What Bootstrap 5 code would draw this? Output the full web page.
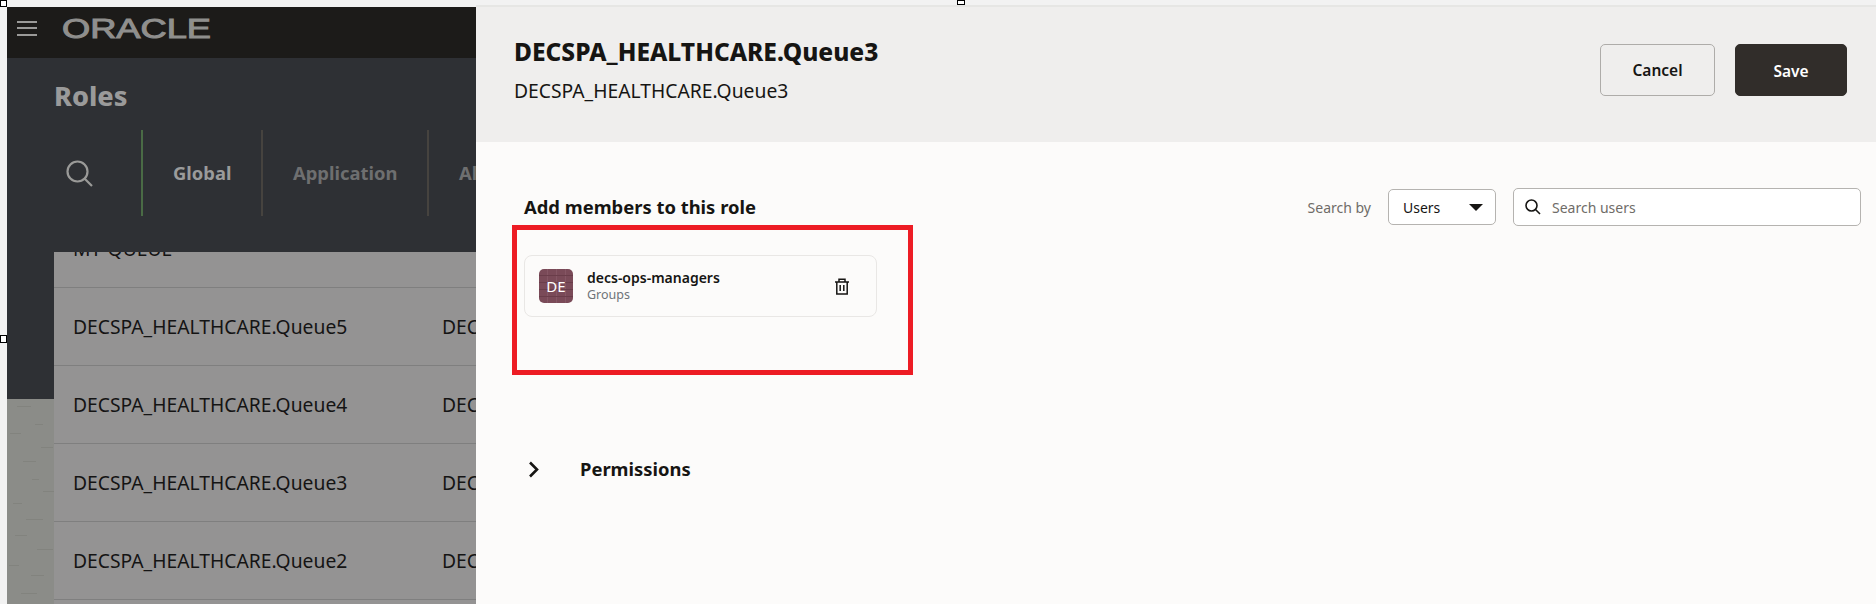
<!DOCTYPE html>
<html lang="en">
<head>
<meta charset="utf-8">
<title>Roles</title>
<link rel="stylesheet" href="https://cdn.jsdelivr.net/npm/bootstrap@5.3.0/dist/css/bootstrap.min.css">
<style>
html,body{height:604px;overflow:hidden}
body{background:#f2f2f2;font-family:"Noto Sans",sans-serif;color:#161513;padding:7px 0 0 7px;position:relative}
.shell{height:597px}
.bgzone{width:469px;flex:none;overflow:hidden}
.topbar{height:51px;background:#1c1b19;padding:0 0 9px 10px;gap:25px}
.burger{width:20px;height:15px;border-top:2px solid #9a9a98;border-bottom:2px solid #9a9a98;flex:none}
.burger::after{content:"";display:block;height:2px;background:#9a9a98;margin-top:4px}
.logo{display:block;flex:none}
.logo text{font-family:"Liberation Sans",sans-serif;font-size:27px;font-weight:400;fill:#8f8f8d;stroke:#8f8f8d;stroke-width:1px}
.darkhead{height:194px;background:#2e3034;padding:18px 0 0 47px}
.pagetitle{font-size:27px;font-weight:800;line-height:40px;color:#9a9a9a;margin:0}
.tabstrip{height:86px;margin-top:14px;width:460px}
.tabsearch{width:89px;flex:none;padding-left:12px;border-right:2px solid #4a6b45;height:100%}
.tabitem{height:100%;flex:none;padding:0 30px;font-size:18.4px;font-weight:700;color:#6e6f70;border-right:2px solid #46433f;white-space:nowrap}
.tabitem.on{color:#9a9b9b;width:120px}
.tabitem.app{width:166px}
.lower{height:352px}
.gutter{width:47px;flex:none}
.gutterdark{height:147px;background:#2e3034}
.gutterpaper{display:block;width:47px;height:205px;background:#8b8c88}
.tablewrap{background:#949393;overflow:hidden;flex:1 1 auto;min-width:0}
.rowlist{margin-top:-42px;width:900px}
.qrow{height:78px;border-bottom:1px solid #7f7f7f;font-size:19.3px;color:#141414;padding:2px 0 0 19px}
.qrow span{width:369px;flex:none;white-space:nowrap}
.drawer{flex:1 1 auto;background:#fcfbfa;min-width:0;box-shadow:0 -2px 0 #e6e6e4}
.drawerhead{height:135px;background:#efeeed;padding:0 29px 9px 38px}
.drawertitle{font-size:24.5px;font-weight:800;line-height:32px;margin:-1px 0 10px;color:#161513}
.drawersub{font-size:19.3px;line-height:26px;margin:0}
.actbtn{height:52px;border-radius:5px;font-size:15.5px;font-weight:600;padding:0;display:flex;align-items:center;justify-content:center}
.actcancel{width:115px;border:1px solid #aeaca9;background:transparent;color:#161513;padding-top:1px}
.actsave{width:112px;background:#312d2a;border:1px solid #312d2a;color:#fff;padding-top:3px}
.actcancel:hover{background:transparent;color:#161513;border-color:#aeaca9}
.actsave:hover{background:#312d2a;color:#fff;border-color:#312d2a}
.actgap{gap:20px}
.drawerbody{padding:46px 15px 0 36px}
.sectiontitle{font-size:18.4px;font-weight:700;margin:0 0 0 12px;line-height:24px}
.searchlabel{font-size:14px;color:#6f6c68;margin-right:17px}
.pickbox{width:108px;height:36px;border:1px solid #b5b3b0;border-radius:5px;background:#fff;font-size:14px;padding:0 12px 0 14px;margin-right:17px}
.caretdown{width:0;height:0;border-left:7px solid transparent;border-right:7px solid transparent;border-top:7px solid #161513}
.findbox{width:348px;height:38px;border:1px solid #b5b3b0;border-radius:5px;background:#fff;font-size:14px;color:#6f6c68;padding-left:11px;gap:11px}
.redframe{width:401px;height:150px;border:5px solid #ed1c24;padding:25px 0 0 7px;margin-top:-1px}
.membercard{width:353px;height:62px;border:1px solid #e9e7e5;border-radius:8px;padding:0 26px 0 14px}
.avatarbox{width:34px;height:34px;border-radius:5px;color:#fff;font-size:15px;background-color:#7a4a58;background-image:repeating-linear-gradient(0deg,transparent 0 6px,#6a3d4a 6px 7px),repeating-linear-gradient(90deg,transparent 0 8px,#855664 8px 9px);margin-right:14px;flex:none}
.membername{font-size:14px;font-weight:600;line-height:18px;color:#161513}
.membertype{font-size:12.5px;line-height:16px;color:#6f7378}
.permline{margin:82px 0 0 16px;font-size:18.4px;font-weight:700;line-height:24px;gap:41px}
.handle{position:absolute;width:7px;background:#fff;border:1px solid #000}
.handle1{left:0;top:0;height:7px}
.handle2{left:0;top:335px;height:8px}
.handle3{left:957px;top:0;height:5px;width:8px}
</style>
</head>
<body>
<div class="d-flex shell">
  <div class="bgzone d-flex flex-column">
    <div class="topbar d-flex align-items-center">
      <div class="burger"></div>
      <svg class="logo" width="150" height="22" viewBox="0 0 150 22"><text x="0" y="20.5" textLength="149" lengthAdjust="spacingAndGlyphs">ORACLE</text></svg>
    </div>
    <div class="darkhead">
      <h1 class="pagetitle">Roles</h1>
      <div class="tabstrip d-flex align-items-center">
        <div class="tabsearch d-flex align-items-center">
          <svg width="27" height="27" viewBox="0 0 27 27" fill="none" stroke="#9a9a98" stroke-width="2.2"><circle cx="11.5" cy="11.5" r="10"/><path d="M18.5 18.5 26 26"/></svg>
        </div>
        <div class="tabitem on d-flex align-items-center">Global</div>
        <div class="tabitem app d-flex align-items-center">Application</div>
        <div class="tabitem border-0 d-flex align-items-center">All</div>
      </div>
    </div>
    <div class="lower d-flex">
      <div class="gutter">
        <div class="gutterdark"></div>
        <svg class="gutterpaper" viewBox="0 0 47 205" fill="#82837e">
          <rect x="10" y="7" width="14" height="1"/><rect x="28" y="25" width="8" height="1"/><rect x="3" y="34" width="11" height="1"/><rect x="34" y="48" width="12" height="1"/>
          <rect x="16" y="62" width="13" height="1"/><rect x="25" y="80" width="7" height="1"/><rect x="36" y="92" width="11" height="1"/><rect x="6" y="104" width="9" height="1"/>
          <rect x="19" y="120" width="17" height="1"/><rect x="8" y="136" width="12" height="1"/><rect x="30" y="150" width="16" height="1"/><rect x="2" y="166" width="10" height="1"/>
          <rect x="24" y="176" width="13" height="1"/><rect x="14" y="194" width="16" height="1"/>
        </svg>
      </div>
      <div class="tablewrap">
        <div class="rowlist">
          <div class="qrow d-flex align-items-center"><span>MY-QUEUE</span></div>
          <div class="qrow d-flex align-items-center"><span>DECSPA_HEALTHCARE.Queue5</span><span>DECSPA_HEALTHCARE.Queue5</span></div>
          <div class="qrow d-flex align-items-center"><span>DECSPA_HEALTHCARE.Queue4</span><span>DECSPA_HEALTHCARE.Queue4</span></div>
          <div class="qrow d-flex align-items-center"><span>DECSPA_HEALTHCARE.Queue3</span><span>DECSPA_HEALTHCARE.Queue3</span></div>
          <div class="qrow d-flex align-items-center"><span>DECSPA_HEALTHCARE.Queue2</span><span>DECSPA_HEALTHCARE.Queue2</span></div>
        </div>
      </div>
    </div>
  </div>
  <div class="drawer d-flex flex-column">
    <div class="drawerhead d-flex justify-content-between align-items-center">
      <div>
        <h2 class="drawertitle">DECSPA_HEALTHCARE.Queue3</h2>
        <p class="drawersub">DECSPA_HEALTHCARE.Queue3</p>
      </div>
      <div class="d-flex actgap">
        <button type="button" class="btn actbtn actcancel">Cancel</button>
        <button type="button" class="btn actbtn actsave">Save</button>
      </div>
    </div>
    <div class="drawerbody">
      <div class="d-flex justify-content-between align-items-center">
        <h3 class="sectiontitle">Add members to this role</h3>
        <div class="d-flex align-items-center">
          <span class="searchlabel">Search by</span>
          <div class="pickbox d-flex align-items-center justify-content-between"><span>Users</span><i class="caretdown"></i></div>
          <div class="findbox d-flex align-items-center">
            <svg width="16" height="16" viewBox="0 0 16 16" fill="none" stroke="#161513" stroke-width="1.6"><circle cx="6.5" cy="6.5" r="5.5"/><path d="M10.5 10.5 15 15"/></svg>
            <span>Search users</span>
          </div>
        </div>
      </div>
      <div class="redframe">
        <div class="membercard d-flex align-items-center">
          <div class="avatarbox d-flex align-items-center justify-content-center">DE</div>
          <div class="flex-grow-1">
            <div class="membername">decs-ops-managers</div>
            <div class="membertype">Groups</div>
          </div>
          <svg width="16" height="17" viewBox="0 0 16 17" fill="none" stroke="#161513" stroke-width="1.5"><path d="M1 4h14M5 4V1.2h6V4M2.8 4v12h10.4V4M6.2 7v6M9.8 7v6"/></svg>
        </div>
      </div>
      <div class="permline d-flex align-items-center">
        <svg width="11" height="17" viewBox="0 0 11 17" fill="none" stroke="#161513" stroke-width="2.6"><path d="M2 1.5 9 8.5 2 15.5"/></svg>
        <span>Permissions</span>
      </div>
    </div>
  </div>
</div>
<div class="handle handle1"></div>
<div class="handle handle2"></div>
<div class="handle handle3"></div>
</body>
</html>
